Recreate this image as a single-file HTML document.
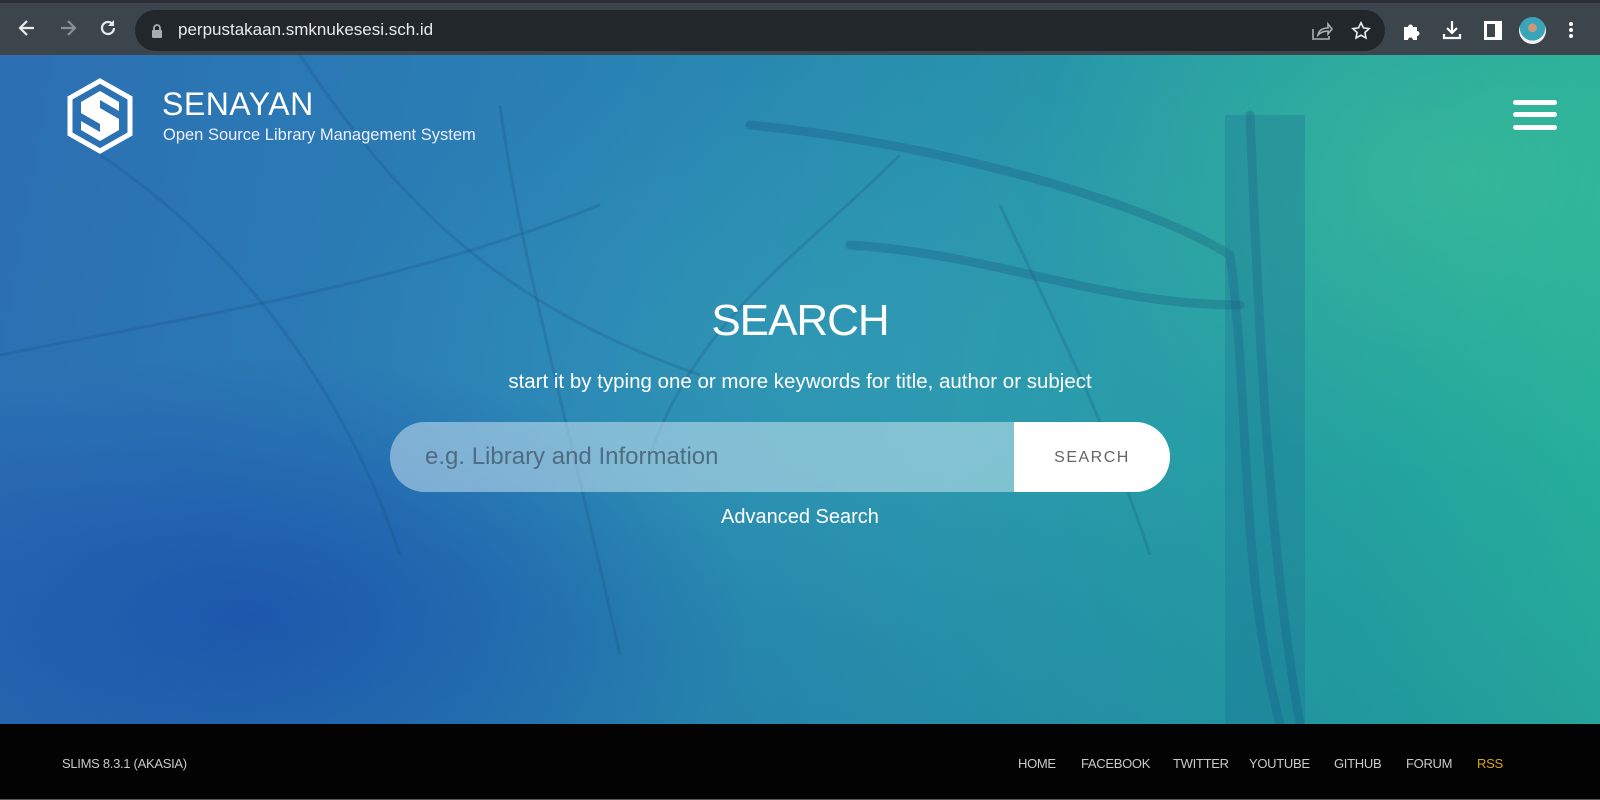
<!DOCTYPE html>
<html><head><meta charset="utf-8"><style>
*{margin:0;padding:0;box-sizing:border-box}
body{width:1600px;height:800px;overflow:hidden;font-family:"Liberation Sans",sans-serif;background:#000;position:relative}
.chrome{position:absolute;left:0;top:0;width:1600px;height:55px;background:#3c454c;border-top:3px solid #2a3035}
.pill{position:absolute;left:135px;top:7px;width:1250px;height:41px;border-radius:21px;background:#22272b}
.url{position:absolute;left:178px;top:17px;color:#e8eaed;font-size:17px}
.hero{position:absolute;left:0;top:55px;width:1600px;height:669px;overflow:hidden;
background:
linear-gradient(180deg,transparent 60%,rgba(20,80,150,.15) 100%),
radial-gradient(ellipse 420px 300px at 1450px 120px,rgba(70,200,150,.5),transparent),
radial-gradient(ellipse 500px 260px at 250px 560px,rgba(20,60,170,.55),transparent),
radial-gradient(ellipse 500px 300px at 800px 300px,rgba(60,170,190,.35),transparent),
linear-gradient(100deg,#2c6fb3 0%,#2981b4 35%,#2895ab 60%,#23a39f 85%,#28b29a 100%)}
.footer{position:absolute;left:0;top:724px;width:1600px;height:76px;background:#030303;border-bottom:1px solid #555}
.footer span{position:absolute;top:32px;font-size:13px;color:#c9c9c9;letter-spacing:-.3px}
</style></head><body>
<div class="chrome">
 <svg style="position:absolute;left:16px;top:14px" width="22" height="22" viewBox="0 0 22 22"><path d="M18 11H5M11 4l-7 7 7 7" stroke="#e8eaed" stroke-width="2.2" fill="none"/></svg>
 <svg style="position:absolute;left:57px;top:14px" width="22" height="22" viewBox="0 0 22 22"><path d="M4 11h13M11 4l7 7-7 7" stroke="#8a9096" stroke-width="2.2" fill="none"/></svg>
 <svg style="position:absolute;left:97px;top:14px" width="22" height="22" viewBox="0 0 22 22"><path d="M17 11a6 6 0 1 1-2-4.5" stroke="#e8eaed" stroke-width="2.2" fill="none"/><path d="M17 3v6h-6z" fill="#e8eaed"/></svg>
 <div class="pill"></div>
 <svg style="position:absolute;left:151px;top:21px" width="12" height="15" viewBox="0 0 12 15"><rect x="1" y="6" width="10" height="8" rx="1" fill="#a9adb1"/><path d="M3 6V4a3 3 0 0 1 6 0v2" stroke="#a9adb1" stroke-width="1.8" fill="none"/></svg>
 <div class="url">perpustakaan.smknukesesi.sch.id</div>
 <svg style="position:absolute;left:1311px;top:18px" width="22" height="20" viewBox="0 0 22 20"><path d="M2 8v10h16v-3M7 14c1-5 5-7 10-7V3l4 5-4 5V10c-4 0-7 1-10 4z" stroke="#aab0b5" stroke-width="1.6" fill="none"/></svg>
 <svg style="position:absolute;left:1350px;top:17px" width="22" height="22" viewBox="0 0 24 24"><path d="M12 3l2.7 5.6 6.1.8-4.5 4.2 1.1 6-5.4-3-5.4 3 1.1-6-4.5-4.2 6.1-.8z" stroke="#e8eaed" stroke-width="1.8" fill="none"/></svg>
 <svg style="position:absolute;left:1401px;top:17px" width="22" height="22" viewBox="0 0 22 22"><path d="M3 7h4a2.5 2.5 0 0 1 5 0h4v4a2.5 2.5 0 0 1 0 5v4H12a2.5 2.5 0 0 0-5 0H3z" fill="#fff"/></svg>
 <svg style="position:absolute;left:1441px;top:16px" width="22" height="22" viewBox="0 0 22 22"><path d="M11 2v12M6 9l5 5 5-5M3 15v4h16v-4" stroke="#fff" stroke-width="2.2" fill="none"/></svg>
 <div style="position:absolute;left:1484px;top:18px;width:18px;height:19px;border:3px solid #fff;border-right-width:7px"></div>
 <div style="position:absolute;left:1519px;top:14px;width:27px;height:27px;border-radius:50%;background:radial-gradient(circle at 50% 40%,#c89a7a 0 20%,#3aa5b8 21% 60%,#f4f4f4 61%)"></div>
 <div style="position:absolute;left:1569px;top:19px;width:4px;height:4px;border-radius:2px;background:#fff;box-shadow:0 6px 0 #fff,0 12px 0 #fff"></div>
</div>
<div class="hero">
 <svg style="position:absolute;left:0;top:0" width="1600" height="669" viewBox="0 0 1600 669" fill="none">
  <g stroke="rgba(20,60,110,.22)" stroke-width="9" stroke-linecap="round">
   <path d="M1300 669 C1270 500 1260 300 1250 60"/>
   <path d="M1280 669 C1240 520 1250 350 1230 200 C1150 150 950 90 750 70"/>
   <path d="M1240 250 C1100 250 1000 200 850 190"/>
  </g>
  <g stroke="rgba(20,70,120,.2)" stroke-width="3">
   <path d="M0 300 C200 260 400 230 600 150"/><path d="M300 0 C400 150 500 250 700 320"/>
   <path d="M900 100 C800 200 700 260 650 400"/><path d="M1000 150 C1050 260 1100 350 1150 500"/>
   <path d="M100 100 C250 200 350 350 400 500"/><path d="M500 50 C520 200 560 330 620 600"/>
  </g>
  <rect x="1225" y="60" width="80" height="609" fill="rgba(25,110,150,.3)"/>
 </svg>
 <svg style="position:absolute;left:67px;top:23px" width="66" height="76" viewBox="0 0 66 76">
  <path d="M33 3L63 20V56L33 73L3 56V20Z" stroke="#fff" stroke-width="5" fill="none"/>
  <path d="M14 24L33 13L52 24V33L33 22V30L52 41V52L33 63L14 52V43L33 54V46L14 35Z" fill="#fff"/>
 </svg>
 <div style="position:absolute;left:162px;top:31px;color:#fff;font-size:32px;letter-spacing:.5px">SENAYAN</div>
 <div style="position:absolute;left:163px;top:71px;color:#eef;font-size:16.5px">Open Source Library Management System</div>
 <div style="position:absolute;left:1513px;top:45px;width:44px;height:5px;border-radius:3px;background:#fff;box-shadow:0 12px 0 #fff,0 25px 0 #fff"></div>
 <div style="position:absolute;left:0;width:1600px;top:241px;text-align:center;color:#fff;font-size:44px;letter-spacing:-1px">SEARCH</div>
 <div style="position:absolute;left:0;width:1600px;top:315px;text-align:center;color:#fff;font-size:20.5px">start it by typing one or more keywords for title, author or subject</div>
 <div style="position:absolute;left:390px;top:367px;width:780px;height:70px;border-radius:35px;overflow:hidden;background:rgba(215,235,245,.5)">
  <div style="position:absolute;left:35px;top:21px;font-size:24px;color:rgba(70,95,115,.85)">e.g. Library and Information</div>
  <div style="position:absolute;left:624px;top:0;width:156px;height:70px;background:#fff;color:#666;font-size:16px;letter-spacing:1.5px;text-align:center;line-height:72px">SEARCH</div>
 </div>
 <div style="position:absolute;left:0;width:1600px;top:451px;text-align:center;color:#fff;font-size:20px">Advanced Search</div>
</div>
<div class="footer">
 <span style="left:62px">SLIMS 8.3.1 (AKASIA)</span>
 <span style="left:1018px">HOME</span>
 <span style="left:1081px">FACEBOOK</span>
 <span style="left:1173px">TWITTER</span>
 <span style="left:1249px">YOUTUBE</span>
 <span style="left:1334px">GITHUB</span>
 <span style="left:1406px">FORUM</span>
 <span style="left:1477px;color:#d9a321">RSS</span>
</div>
</body></html>
